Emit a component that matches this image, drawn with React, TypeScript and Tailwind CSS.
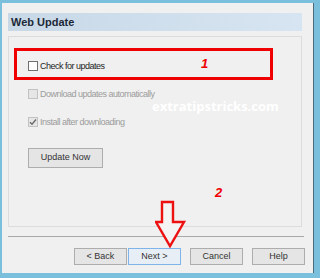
const ui = { fontFamily: '"Liberation Sans", Arial, sans-serif' }

function Box({ state }: { state: 'on' | 'off' | 'checked' }) {
  if (state === 'on') {
    return <span className="block h-[10px] w-[10px] border border-[#707070] bg-white" />
  }
  return (
    <span className="flex h-[10px] w-[10px] items-center justify-center border border-[#c2c2c2] bg-[#e6e6e6]">
      {state === 'checked' && (
        <svg width="8" height="8" viewBox="0 0 8 8" aria-hidden>
          <path d="M1 4.2 L3 6.2 L7 1.5" fill="none" stroke="#6b6b6b" strokeWidth="1.4" />
        </svg>
      )}
    </span>
  )
}

function Row({ label, state }: { label: string; state: 'on' | 'off' | 'checked' }) {
  return (
    <div className="flex h-[10px] items-center gap-[2px]">
      <Box state={state} />
      <span
        className={`text-[9px] leading-none tracking-[-0.5px] ${state === 'on' ? 'text-[#1e1e1e]' : 'text-[#9c9c9c]'}`}
      >
        {label}
      </span>
    </div>
  )
}

function Btn({ label, main }: { label: string; main?: boolean }) {
  return (
    <div
      className={`flex h-[17px] w-[53px] items-center justify-center border text-[9px] text-[#333] ${
        main ? 'border-[#7eb4ea] bg-[#e8eef5]' : 'border-[#adadad] bg-[#e5e5e5]'
      }`}
    >
      {label}
    </div>
  )
}

function DownArrow() {
  return (
    <svg width="32" height="50" viewBox="0 0 32 50" aria-hidden>
      <polygon
        points="7,2 18,2 18,22 29,22 15,46 1,22 7,22"
        fill="#f4f4f4"
        stroke="#ee1111"
        strokeWidth="2.4"
        strokeLinejoin="miter"
      />
    </svg>
  )
}

export default function App() {
  return (
    <div className="relative h-[278px] w-[320px] bg-[#7abfdc] pb-[5px] pl-[2px] pr-[6px] pt-[3px]" style={ui}>
      <div className="flex h-full flex-col border-r border-[#4a6a7a] bg-[#f0f0f0] px-[6px] pt-[10px]">
        {/* header band */}
        <div className="flex h-[18px] w-[294px] items-center bg-gradient-to-r from-[#c8d8e6] to-[#d7e5f2] pl-[3px]">
          <span className="text-[11px] font-bold text-[#1b2838]">Web Update</span>
        </div>

        {/* group box */}
        <div className="mt-[5px] flex h-[191px] w-[294px] flex-col border border-[#dcdcdc] pl-[19px] pt-[24px]">
          <div className="flex flex-col gap-[18px]">
            <Row label="Check for updates" state="on" />
            <Row label="Download updates automatically" state="off" />
            <Row label="Install after downloading" state="checked" />
          </div>
          <div className="mt-[21px] flex h-[20px] w-[75px] items-center justify-center border border-[#adadad] bg-[#e5e5e5] text-[9px] text-[#333]">
            Update Now
          </div>
        </div>

        {/* separator */}
        <div className="mt-[9px] h-px w-[296px] bg-[#a9a9a9]" />

        {/* buttons */}
        <div className="mt-[11px] flex w-[297px] justify-end">
          <Btn label="< Back" />
          <div className="ml-px">
            <Btn label="Next >" main />
          </div>
          <div className="ml-[9px]">
            <Btn label="Cancel" />
          </div>
          <div className="ml-[9px]">
            <Btn label="Help" />
          </div>
        </div>
      </div>

      {/* annotations */}
      <div className="absolute left-[14px] top-[48px] h-[32px] w-[259px] border-[3px] border-[#f00000]" />
      <span className="absolute left-[201px] top-[57px] text-[13px] font-bold italic leading-none text-[#f00000]">1</span>
      <span className="absolute left-[215px] top-[186px] text-[13px] font-bold italic leading-none text-[#f00000]">2</span>
      <span
        className="absolute left-[152px] top-[100px] text-[13px] font-bold leading-none text-white"
        style={{ fontFamily: '"Open Sans", sans-serif' }}
      >
        extratipstricks.com
      </span>
      <div className="absolute left-[155px] top-[200px]">
        <DownArrow />
      </div>
    </div>
  )
}
